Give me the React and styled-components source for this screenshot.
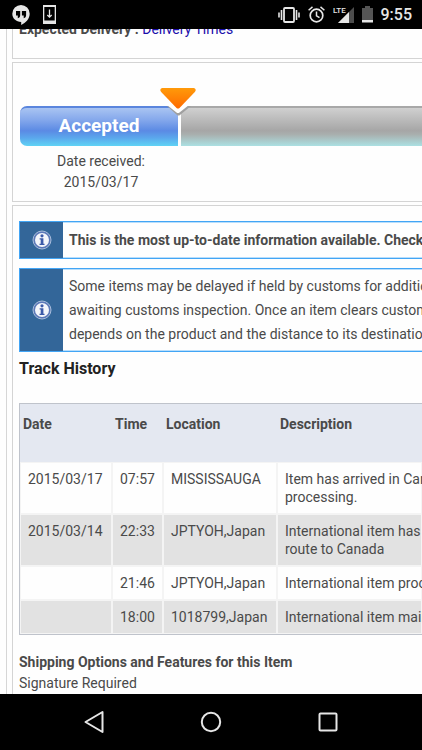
import React from 'react';
import styled, { createGlobalStyle } from 'styled-components';

const GlobalStyle = createGlobalStyle`
  * {
    box-sizing: border-box;
  }
  body {
    margin: 0;
    background: #000;
    color: #4a4a4a;
    font: 14px/18px Roboto, "Liberation Sans", sans-serif;
  }
`;

const Screen = styled.div`
  display: flex;
  flex-direction: column;
  height: 100vh;
`;

const StatusBar = styled.header`
  display: flex;
  flex: none;
  align-items: center;
  justify-content: space-between;
  height: 29px;
  padding: 0 10px 0 12px;
  background: #000;
`;

const StatusGroup = styled.div`
  display: flex;
  align-items: center;
  gap: ${({ $gap }) => $gap}px;
`;

const Clock = styled.span`
  color: #e6e6e6;
  font-size: 16px;
  font-weight: 500;
`;

const Viewport = styled.main`
  flex: 1;
  min-height: 0;
  overflow: hidden;
  background: #fefefe;
`;

// the page is scrolled a little, so its first line sits under the status bar
const Sheet = styled.div`
  display: flex;
  flex-direction: column;
  gap: 3px;
  margin: -10px 0 0 6px;
  padding-left: 5px;
  border-left: 1px solid #d6d6d6;
`;

const Panel = styled.section`
  padding: ${({ $pad }) => $pad};
  border: 1px solid #d4d4d4;
  border-right: 0;
  overflow: hidden;
  white-space: nowrap;
`;

const Link = styled.a`
  color: #1a0dab;
  text-decoration: none;
`;

const Progress = styled.div`
  position: relative;
  display: flex;
  gap: 3px;
  height: 40px;
`;

const Step = styled.div`
  flex: none;
  width: 158px;
  border-top: 2px solid #5a85dd;
  border-radius: 7px 0 0 7px;
  background: linear-gradient(#a9c4f2, #86a9ec 30%, #5b8ae4 60%, #5ba6ec 78%, #5fd3f5);
  color: #fff;
  font-size: 19px;
  font-weight: 700;
  line-height: 36px;
  text-align: center;
`;

const Rest = styled.div`
  flex: 1;
  border-top: 2px solid #a8a8a8;
  background: linear-gradient(#d0d0d0, #a6a6a6 60%, #a9b0af 70%, #abe0e2);
`;

const Marker = styled.svg`
  position: absolute;
  top: -19px;
  left: 138px;
`;

const StepNote = styled.div`
  width: 162px;
  padding-top: 5px;
  line-height: 21px;
  text-align: center;
`;

const Notice = styled.div`
  display: flex;
  margin-bottom: 9px;
  border: 1px solid #42a5f5;
  border-right: 0;
  box-shadow: inset 0 1px #b9defb, inset 0 -1px #b9defb;
`;

const NoticeIcon = styled.div`
  display: flex;
  flex: none;
  align-items: center;
  justify-content: center;
  width: 43px;
  background: #336699;
`;

const NoticeText = styled.p`
  margin: 0;
  padding: ${({ $bold }) => ($bold ? '6px' : '5px 6px')};
  font-weight: ${({ $bold }) => ($bold ? 700 : 400)};
  line-height: 24px;
`;

const Title = styled.h2`
  margin: -2px 0 24px;
  color: #222;
  font-size: 16px;
  line-height: 20px;
`;

const History = styled.table`
  width: 100%;
  table-layout: fixed;
  border: 1px solid #bfc3cb;
  border-right: 0;
  border-spacing: 0;
`;

const Col = styled.col`
  width: ${({ $width }) => $width};
`;

const Th = styled.th`
  height: 58px;
  padding: 11px 3px;
  background: #e4e8f1;
  text-align: left;
  vertical-align: top;
`;

const Td = styled.td`
  padding: 7px;
  border: 1px solid #f4f4f4;
  vertical-align: top;
`;

const Row = styled.tr`
  background: #fefefe;

  &:nth-child(even) {
    background: #e2e2e2;
  }
`;

const Line = styled.span`
  display: block;
`;

const Features = styled.div`
  padding-top: 17px;
  line-height: 21px;
`;

const NavBar = styled.nav`
  display: flex;
  flex: none;
  justify-content: center;
  gap: 69px;
  height: 56px;
  background: #000;
`;

const NavButton = styled.button`
  display: flex;
  align-items: center;
  justify-content: center;
  width: 48px;
  padding: 0;
  border: 0;
  background: none;
`;

const rows = [
  {
    date: '2015/03/17', time: '07:57', location: 'MISSISSAUGA', description: ['Item has arrived in Canada', 'processing.'],
  },
  {
    date: '2015/03/14', time: '22:33', location: 'JPTYOH,Japan', description: ['International item has', 'route to Canada'],
  },
  {
    date: '', time: '21:46', location: 'JPTYOH,Japan', description: ['International item processed'],
  },
  {
    date: '', time: '18:00', location: '1018799,Japan', description: ['International item mailed'],
  },
];

const HangoutsIcon = () => (
  <svg width="18" height="20" viewBox="0 0 18 20" aria-hidden="true">
    <path fill="#e6e6e6" d="M9 0a8.7 8.7 0 0 0-8.7 8.7c0 4.7 3.8 8.2 8.9 8.2V20c4.6-2.3 8.5-6.3 8.5-11.3A8.700 8.700 0 0 0 9 0z" />
    <path fill="#000" d="M4 6h4.200v4.300c0 1.500-.8 2.500-2.400 3v-2.700H4zM9.900 6h4.200v4.300c0 1.500-.8 2.500-2.400 3v-2.700H9.900z" />
  </svg>
);

const DownloadIcon = () => (
  <svg width="13" height="19" viewBox="0 0 13 19" aria-hidden="true">
    <path fill="#e6e6e6" fillRule="evenodd" d="M0 0h13v19H0zM1.300 2v13.500h10.400V2z" />
    <path fill="none" stroke="#e6e6e6" strokeWidth="1.300" d="M6.500 4.500v7.500M4.300 10l2.200 2.200L8.700 10" />
  </svg>
);

const VibrateIcon = () => (
  <svg width="22" height="16" viewBox="0 0 22 16" aria-hidden="true">
    <rect x="6" y="1" width="10" height="14" rx="1" fill="none" stroke="#e6e6e6" strokeWidth="1.800" />
    <path fill="none" stroke="#e6e6e6" strokeWidth="1.600" d="M3.500 3v10M18.500 3v10M1 5.500v5M21 5.500v5" />
  </svg>
);

const AlarmIcon = () => (
  <svg width="17" height="17" viewBox="0 0 17 17" fill="none" stroke="#e6e6e6" aria-hidden="true">
    <circle cx="8.500" cy="9.500" r="6.300" strokeWidth="1.700" />
    <path strokeWidth="1.500" d="M8.500 5.500v4.300l3 1.900M.6 4.200 4.500.9M16.400 4.200 12.500.9" />
  </svg>
);

const SignalIcon = () => (
  <svg width="21" height="18" viewBox="0 0 21 18" aria-label="LTE">
    <path fill="#4d4d4d" d="M21 1v16H5z" />
    <path fill="#e6e6e6" d="M16 6v11H5z" />
    <text x="0" y="7" fill="#e6e6e6" fontSize="8" fontWeight="500" fontFamily="Roboto">LTE</text>
  </svg>
);

const BatteryIcon = () => (
  <svg width="11" height="17" viewBox="0 0 11 17" aria-hidden="true">
    <path fill="#555" d="M3 0h5v2h3v12H0V2h3z" />
    <path fill="#e6e6e6" d="M0 14h11v2.500H0z" />
  </svg>
);

const InfoIcon = () => (
  <svg width="20" height="20" viewBox="0 0 20 20" aria-hidden="true">
    <circle cx="10" cy="10" r="9" fill="#5c79b8" stroke="#a9bddc" />
    <circle cx="10" cy="10" r="7" fill="#f4f6fb" />
    <circle cx="10" cy="5.800" r="1.600" fill="#3d5ba9" />
    <path fill="#3d5ba9" d="M7.600 8.200h3.800v5.500h1.100V15h-5v-1.300h1.200V9.500H7.600z" />
  </svg>
);

const App = () => (
  <Screen>
    <GlobalStyle />
    <StatusBar>
      <StatusGroup $gap={13}>
        <HangoutsIcon />
        <DownloadIcon />
      </StatusGroup>
      <StatusGroup $gap={8}>
        <VibrateIcon />
        <AlarmIcon />
        <SignalIcon />
        <BatteryIcon />
        <Clock>9:55</Clock>
      </StatusGroup>
    </StatusBar>

    <Viewport>
      <Sheet>
        <Panel $pad="0 0 20px 6px">
          <b>Expected Delivery :</b>
          {' '}
          <Link href="#times">Delivery Times</Link>
        </Panel>

        <Panel $pad="43px 0 8px 7px">
          <Progress>
            <Step>Accepted</Step>
            <Rest />
            <Marker width="40" height="30" viewBox="0 0 40 30" aria-hidden="true">
              <defs>
                <linearGradient id="arrow" x1="0" y1="0" x2="0" y2="1">
                  <stop offset="0" stopColor="#ff9a0a" />
                  <stop offset="1" stopColor="#ff6a00" />
                </linearGradient>
              </defs>
              <path fill="#a0a0a0" d="M9 19h24l-11 9q-1.500 1.200-3 0z" />
              <path fill="#fff" d="M6.500 16h27L21.500 25.500q-1.500 1-3 0z" />
              <path fill="url(#arrow)" d="M4 1h32q3 1.500.8 4L21.500 21q-1.500 1.200-3 0L3.200 5Q1 2.500 4 1z" />
            </Marker>
          </Progress>
          <StepNote>
            Date received:
            <br />
            2015/03/17
          </StepNote>
        </Panel>

        <Panel $pad="15px 0 8px 6px">
          <Notice>
            <NoticeIcon><InfoIcon /></NoticeIcon>
            <NoticeText $bold>This is the most up-to-date information available. Check</NoticeText>
          </Notice>
          <Notice>
            <NoticeIcon><InfoIcon /></NoticeIcon>
            <NoticeText>
              Some items may be delayed if held by customs for additional
              <br />
              awaiting customs inspection. Once an item clears customs,
              <br />
              depends on the product and the distance to its destination.
            </NoticeText>
          </Notice>

          <Title>Track History</Title>
          <History>
            <colgroup>
              <Col $width="92px" />
              <Col $width="51px" />
              <Col $width="114px" />
              <Col $width="auto" />
            </colgroup>
            <thead>
              <tr>
                <Th>Date</Th>
                <Th>Time</Th>
                <Th>Location</Th>
                <Th>Description</Th>
              </tr>
            </thead>
            <tbody>
              {rows.map((row) => (
                <Row key={row.time}>
                  <Td>{row.date}</Td>
                  <Td>{row.time}</Td>
                  <Td>{row.location}</Td>
                  <Td>
                    {row.description.map((line) => <Line key={line}>{line}</Line>)}
                  </Td>
                </Row>
              ))}
            </tbody>
          </History>

          <Features>
            <b>Shipping Options and Features for this Item</b>
            <br />
            Signature Required
          </Features>
        </Panel>
      </Sheet>
    </Viewport>

    <NavBar>
      <NavButton aria-label="Back">
        <svg width="22" height="24" viewBox="0 0 22 24" aria-hidden="true">
          <path fill="none" stroke="#e6e6e6" strokeWidth="2" strokeLinejoin="round" d="M19.500 2v20L2.500 12z" />
        </svg>
      </NavButton>
      <NavButton aria-label="Home">
        <svg width="22" height="22" viewBox="0 0 22 22" aria-hidden="true">
          <circle cx="11" cy="11" r="9.200" fill="none" stroke="#e6e6e6" strokeWidth="2" />
        </svg>
      </NavButton>
      <NavButton aria-label="Recent apps">
        <svg width="20" height="20" viewBox="0 0 20 20" aria-hidden="true">
          <rect x="1.500" y="1.500" width="17" height="17" rx="1" fill="none" stroke="#e6e6e6" strokeWidth="2" />
        </svg>
      </NavButton>
    </NavBar>
  </Screen>
);

export default App;
